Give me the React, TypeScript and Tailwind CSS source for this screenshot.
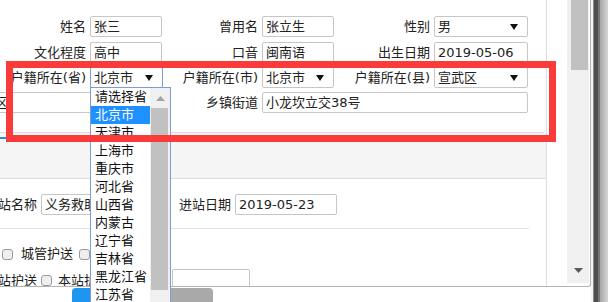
const FONT = "font-['DejaVu_Sans','Noto_Sans_CJK_SC',sans-serif]";

const provinces = ["请选择省", "北京市", "天津市", "上海市", "重庆市", "河北省", "山西省", "内蒙古", "辽宁省", "吉林省", "黑龙江省", "江苏省"];

function Caret() {
  return (
    <svg width="8" height="6" viewBox="0 0 8 6" className="shrink-0">
      <polygon points="0,0 8,0 4,6" fill="#111" />
    </svg>
  );
}

function Field({ w, children, focus }: { w: string; children?: React.ReactNode; focus?: boolean }) {
  return (
    <div className={`${w} h-[21px] shrink-0 border rounded-[2px] pl-[3px] flex items-center text-[13px] text-[#222] whitespace-nowrap overflow-hidden ${focus ? "border-[#7b9ed8]" : "border-[#c6c6c6]"}`}>
      {children}
    </div>
  );
}

function Select({ w, value, focus }: { w: string; value: string; focus?: boolean }) {
  return (
    <Field w={w} focus={focus}>
      <span className="flex-1">{value}</span>
      <span className="mr-[9px]"><Caret /></span>
    </Field>
  );
}

function Label({ w, text }: { w: string; text: string }) {
  return (
    <div className={`${w} shrink-0 flex justify-end whitespace-nowrap text-[13px] text-[#222] pr-[4px]`}>
      {text}
    </div>
  );
}

function Check() {
  return <div className="w-[11px] h-[11px] shrink-0 rounded-[3px] border border-[#9a9a9a] bg-[#efefef]" />;
}

export default function App() {
  return (
    <div className={`${FONT} relative w-[608px] h-[302px] overflow-hidden bg-white flex`}>
      {/* dialog body */}
      <div className="w-[591px] shrink-0 flex flex-col">
        <div className="h-[287px] border-r border-b border-[#b4b4b4] rounded-br-[3px] flex">
          <div className="w-[547px] h-[286px] shrink-0 border-r border-[#dedede] overflow-hidden flex flex-col">
            {/* form card */}
            <div className="h-[133px] shrink-0 border-b border-[#dcdcdc] rounded-br-[3px] pt-[16px]">
              <div className="flex items-center h-[21px]">
                <Label w="w-[90px]" text="姓名" />
                <Field w="w-[72px]">张三</Field>
                <Label w="w-[100px]" text="曾用名" />
                <Field w="w-[72px]">张立生</Field>
                <Label w="w-[100px]" text="性别" />
                <Select w="w-[94px]" value="男" />
              </div>
              <div className="flex items-center h-[21px] mt-[5px]">
                <Label w="w-[90px]" text="文化程度" />
                <Field w="w-[72px]">高中</Field>
                <Label w="w-[100px]" text="口音" />
                <Field w="w-[72px]">闽南语</Field>
                <Label w="w-[100px]" text="出生日期" />
                <Field w="w-[94px]">2019-05-06</Field>
              </div>
              <div className="flex items-center h-[21px] mt-[4px]">
                <Label w="w-[90px]" text="户籍所在(省)" />
                <Select w="w-[73px]" value="北京市" focus />
                <Label w="w-[99px]" text="户籍所在(市)" />
                <Select w="w-[72px]" value="北京市" />
                <Label w="w-[100px]" text="户籍所在(县)" />
                <Select w="w-[94px]" value="宣武区" />
              </div>
              <div className="flex items-center h-[21px] mt-[4px]">
                <div className="w-[91px] h-[21px] shrink-0 border-y border-[#c6c6c6] flex items-center text-[13px] text-[#222] overflow-hidden">
                  <span className="-ml-[5px]">区</span>
                </div>
                <Label w="w-[171px]" text="乡镇街道" />
                <Field w="w-[266px]">小龙坎立交38号</Field>
              </div>
            </div>

            {/* gray strip */}
            <div className="h-[46px] shrink-0 bg-[#f5f5f5] border-b border-[#dcdcdc]">
              <div className="mt-[4px] w-[7px] h-[2px] bg-[#2a8be0]" />
            </div>

            {/* lower form */}
            <div className="flex items-center h-[22px] mt-[15px]">
              <Label w="w-[41px]" text="进站名称" />
              <Field w="w-[120px]">义务救助站</Field>
              <Label w="w-[74px]" text="进站日期" />
              <Field w="w-[102px]">2019-05-23</Field>
            </div>
            <div className="w-[529px] mt-[13px] border-t border-[#e3e3e3]" />
            <div className="flex items-center h-[14px] mt-[18px] text-[13px] text-[#222]">
              <div className="ml-[2px]"><Check /></div>
              <span className="ml-[8px] whitespace-nowrap">城管护送</span>
              <div className="ml-[6px]"><Check /></div>
              <span className="ml-[8px] whitespace-nowrap">民警护送</span>
            </div>
            <div className="flex items-start mt-[8px] text-[13px] text-[#222]">
              <div className="w-[37px] shrink-0 flex justify-end whitespace-nowrap mt-[2px]">进站护送</div>
              <div className="ml-[4px] mt-[6px]"><Check /></div>
              <span className="ml-[6px] whitespace-nowrap mt-[2px]">本站护送</span>
              <div className="ml-[62px] w-[78px] h-[21px] border border-[#c6c6c6] rounded-[2px]" />
            </div>
          </div>
          <div className="w-[20px] shrink-0" />
          <div className="w-[22px] h-[283px] shrink-0 bg-[#f0f0f0] flex flex-col items-center">
            <div className="ml-[2px] w-[17px] h-[70px] bg-[#c1c1c1]" />
            <div className="flex-1" />
            <svg width="9" height="5" viewBox="0 0 9 5" className="mb-[10px]">
              <polygon points="0,0 9,0 4.5,5" fill="#5a5a5a" />
            </svg>
          </div>
        </div>
        {/* buttons peeking */}
        <div className="flex mt-[1px] h-[15px]">
          <div className="ml-[72px] w-[60px] h-full bg-[#1e96f0] rounded-tl-[4px]" />
          <div className="w-[81px] h-full bg-[#a9a9a9] rounded-tr-[4px]" />
        </div>
      </div>

      {/* window frame edge */}
      <div className="flex h-full">
        <div className="w-[2px] bg-[#f4f4f4]" />
        <div className="w-[1px] bg-[#8a8a8a]" />
        <div className="w-[4px] bg-[#4e4e4e]" />
        <div className="w-[2px] bg-[#777777]" />
        <div className="w-[8px] bg-gradient-to-r from-[#a6a6a6] to-[#d6d6d6]" />
      </div>

      {/* open province dropdown */}
      <div className="absolute left-[90px] top-[87px] w-[81px] h-[230px] border border-[#7b9ed8] bg-white flex z-10">
        <div className="w-[59px] shrink-0 flex flex-col">
          {provinces.map((p) => (
            <div
              key={p}
              className={`h-[18px] shrink-0 pl-[4px] flex items-center text-[13px] whitespace-nowrap ${p === "北京市" ? "bg-[#1e90ff] text-white" : "text-[#111]"}`}
            >
              {p}
            </div>
          ))}
        </div>
        <div className="w-[20px] shrink-0 bg-[#f0f0f0] flex flex-col">
          <div className="h-[20px] flex items-center justify-center">
            <svg width="9" height="5" viewBox="0 0 9 5">
              <polygon points="4.5,0 9,5 0,5" fill="#a3a3a3" />
            </svg>
          </div>
          <div className="ml-[1px] w-[17px] h-[182px] bg-[#c1c1c1]" />
        </div>
      </div>

      {/* red annotation frame */}
      <div className="absolute left-[6px] top-[61px] w-[550px] h-[81px] border-[7px] border-[#fb3a3a] z-20" />
    </div>
  );
}
